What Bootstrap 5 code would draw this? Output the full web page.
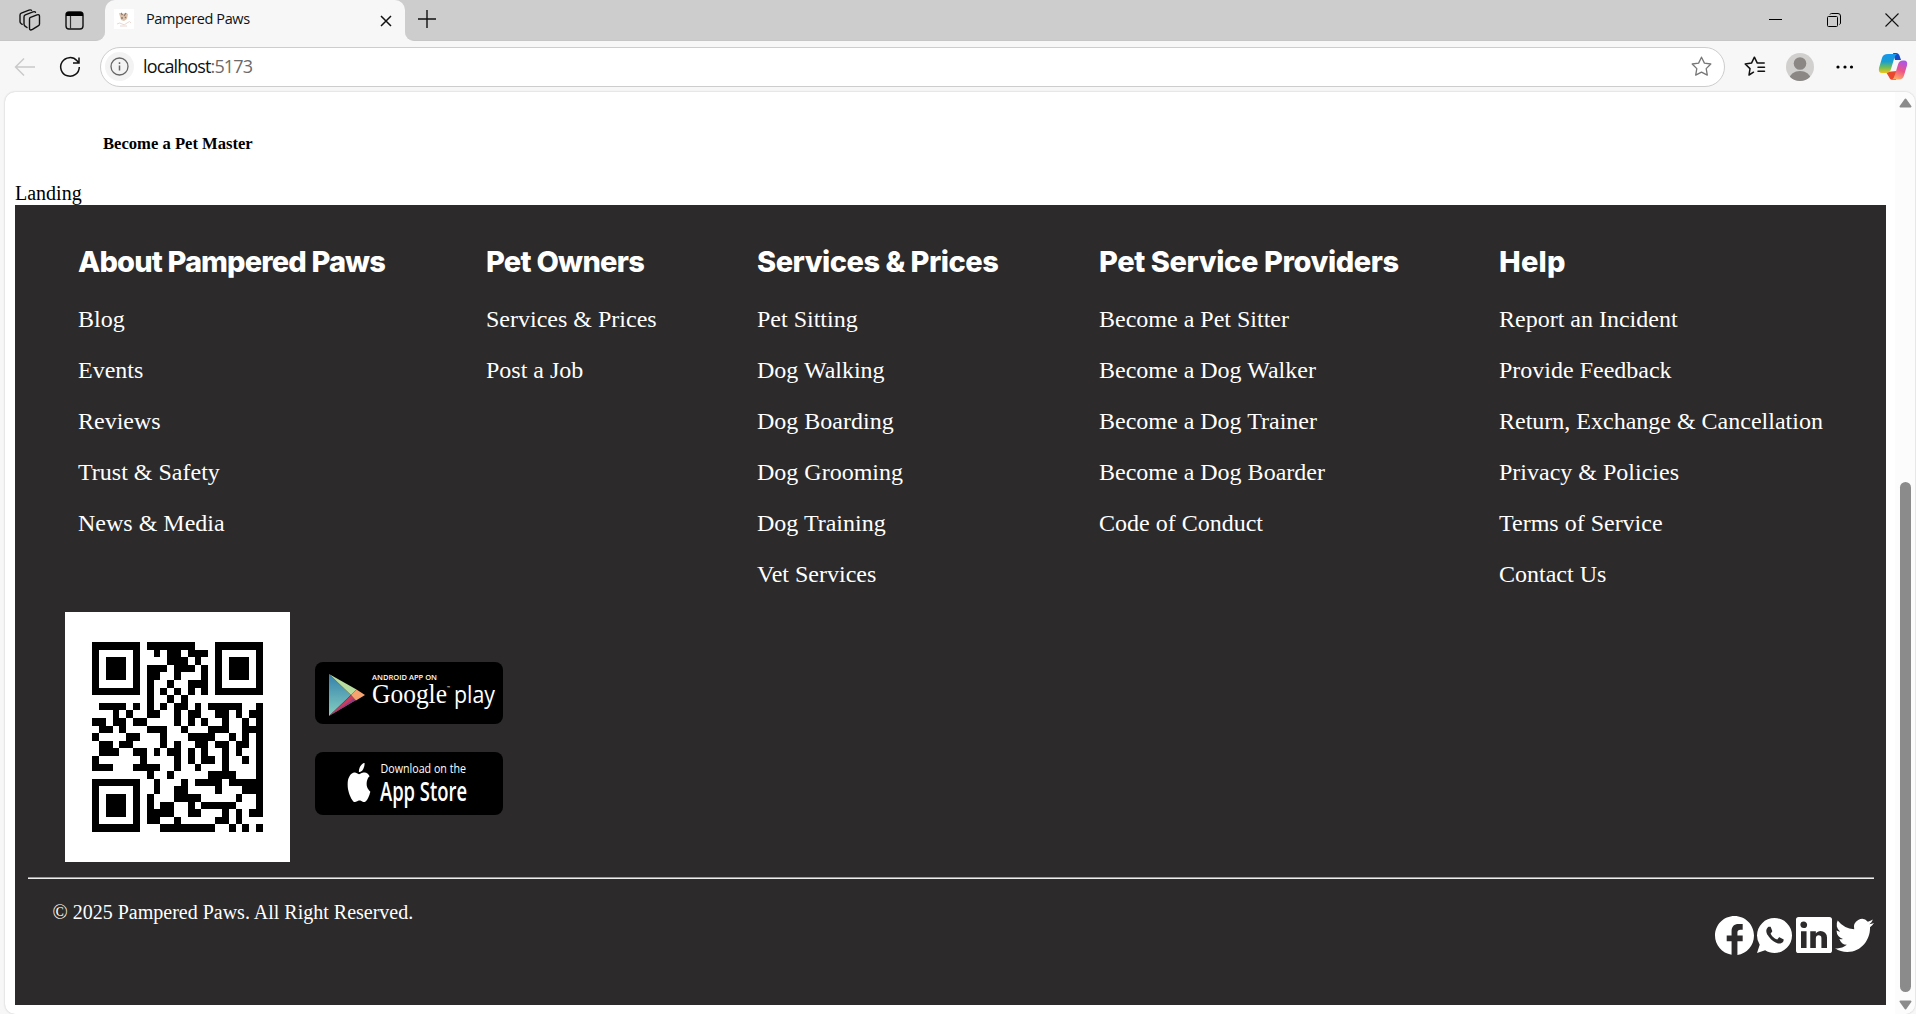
<!DOCTYPE html>
<html lang="en">
<head>
<meta charset="utf-8">
<title>Pampered Paws</title>
<link href="https://cdn.jsdelivr.net/npm/bootstrap@5.3.0/dist/css/bootstrap.min.css" rel="stylesheet">
<style>
html,body{height:100%;overflow:hidden}
body{background:#f7f7f7;font-family:"Liberation Serif",serif;color:#000}
svg{display:block;flex:none;overflow:visible}
.tabstrip{height:41px;background:#f7f7f7}
.strip-left{width:105px;background:#cdcdcd;border-bottom-right-radius:9px;padding:0 21px 0 19px;border-bottom:1px solid #c6c6c6}
.active-tab{width:300px;background:#f7f7f7;border-radius:10px 10px 0 0;padding:0 13px 3px 9px;font:14.5px "Open Sans",sans-serif;color:#111}
.strip-mid{background:#cdcdcd}
.strip-right{background:#cdcdcd;border-bottom-left-radius:9px;padding:0 17.500px 0 12px;border-bottom:1px solid #c6c6c6}
.title-text{letter-spacing:-.4px;margin-left:12px;line-height:20px}
.toolbar-row{height:51px;padding:0 8px 0 14px}
.url-box{width:1625px;height:40px;margin-left:19px;border:1px solid #cdcdcd;border-radius:20px;padding:0 12px 0 4px;font:18px "Open Sans",sans-serif}
.info-dot{width:29px;height:29px;background:#f3f3f3}
.url-text{margin-left:9px;letter-spacing:-.87px;color:#111;line-height:24px;margin-bottom:1px}
.url-text span{color:#6b6b6b}
.viewport-card{height:922px;margin-left:5px;background:#fff;border-radius:10px;box-shadow:0 0 2px #bbb;padding-left:10px;width:1910px}
.page-col{width:1871px}
.master-line{font-size:16.6px;font-weight:700;line-height:20px;padding:42px 0 0 88px}
.landing-line{font-size:20px;line-height:23px;margin-top:28px}
.site-footer{height:800px;background:#2c2a2b;color:#fff;padding:40px 12px 0 13px}
.foot-cols{height:367px;padding-left:50px}
.foot-cols h3{font:800 29px/34px Inter,sans-serif;margin:0 0 15px;white-space:nowrap}
.foot-cols a{display:block;font-size:24px;line-height:27px;padding:12px 0;color:#fff;text-decoration:none;white-space:nowrap}
.w1{width:408px}.w2{width:271px}.w3{width:342px}.w4{width:400px}.w5{width:324px}
.w1 h3{letter-spacing:-.87px}.w2 h3{letter-spacing:-.75px}.w3 h3{letter-spacing:-.5px}.w4 h3{letter-spacing:-.4px}.w5 h3{letter-spacing:.2px}
.apps{margin-left:37px;gap:25px}
.badges-col{gap:28px;padding-top:2px}
.qr-box{width:225px;height:250px;background:#fff;padding:30px 27px}
.rule{height:2px;margin-top:15px;background:linear-gradient(#9a9a9a 50%,#eee 50%)}
.copyright{font-size:20px;line-height:23px;margin:22px 0 0 24.500px}
.socials{margin-top:36px;height:40px}
.sbar{width:20px;margin-left:9px;background:#fcfcfc;border-radius:0 10px 10px 0;padding:6px 0 4px}
.sthumb{width:11px;height:510px;border-radius:6px;background:#8b8b8b;margin-top:auto;margin-bottom:8px}
</style>
<script src="https://cdn.jsdelivr.net/npm/bootstrap@5.3.0/dist/js/bootstrap.bundle.min.js"></script>
</head>
<body>
<header>
 <div class="tabstrip d-flex">
  <div class="bg-transparent"><div class="strip-left d-flex align-items-center justify-content-between h-100">
   <svg width="23" height="22" viewBox="0 0 23 22" fill="none" stroke="#111" stroke-width="1.4" stroke-linejoin="round" stroke-linecap="round"><path d="M10.500 10q0-1.200 1-1.600l6.500-2.600q2.500-.8 2.500 1.500v7.600q0 1.400-1.300 2l-5.700 3.500q-3 1.500-3-1.200z"/><path d="M8 18.500l-2-1.400q-1-.7-1-2V8q0-1.500 1.300-2.100l7.700-3q1.800-.6 2.500.3"/><path d="M3.200 15.300l-1.200-.8q-1-.7-1-2V6.200q0-1.500 1.300-2.100l7.700-3q1.500-.6 2.500.2"/></svg>
   <svg width="19" height="19" viewBox="0 0 19 19"><rect x="1" y="1" width="17" height="17" rx="3" fill="none" stroke="#111" stroke-width="1.400"/><path d="M1 5V3.500Q1 1 3.500 1h12Q18 1 18 3.500V5z"/><path d="M5.500 5v13" stroke="#333" stroke-width="1.200"/></svg>
  </div></div>
  <div class="strip-mid"><div class="active-tab d-flex align-items-center h-100">
   <svg width="20" height="20" viewBox="0 0 20 20"><path fill="#fff" d="M0 0h20v20H0z"/><path d="M5 4l3 1 4-1 2 1-1 5-3 2-3-1z" fill="#dcc3ae"/><path d="M7 4l1.500 2M12 4l-2 3M7 9h2M11 8l1 1" stroke="#92796c" stroke-width="1.300"/><path d="M3 15q3-2 5 0t5-1 4 0M6 17h7" stroke="#ead7d2" fill="none"/></svg>
   <span class="title-text">Pampered Paws</span>
   <svg class="ms-auto mt-1" width="12" height="12" viewBox="0 0 12 12" stroke="#111" stroke-width="1.500"><path d="M1 1l10 10M11 1L1 11"/></svg>
  </div></div>
  <div class="strip-right d-flex flex-grow-1 align-items-center">
   <svg width="20" height="20" viewBox="0 0 20 20" stroke="#111" stroke-width="1.400"><path d="M1 9h18M10 0v18"/></svg>
   <svg class="ms-auto" width="13" height="13" viewBox="0 0 13 13" stroke="#000" stroke-width="1"><path d="M0 5.500h13"/></svg>
   <svg style="margin-left:45px" width="14" height="14" viewBox="0 0 14 14" fill="none" stroke="#000"><rect x=".5" y="3.500" width="10" height="10" rx="1"/><path d="M3 1.500q.3-1 1.500-1H11q2.500 0 2.500 2.500v7q0 1-1 1.500"/></svg>
   <svg style="margin-left:44px" width="14" height="14" viewBox="0 0 14 14" stroke="#111" stroke-width="1.100"><path d="M.5.500l13 13M13.500.500l-13 13"/></svg>
  </div>
 </div>
 <div class="toolbar-row d-flex align-items-center">
  <svg width="22" height="20" viewBox="0 0 22 20" fill="none" stroke="#c9c9c9" stroke-width="1.400"><path d="M21 10H2M10 1.500L1.500 10l8.500 8.500"/></svg>
  <svg style="margin-left:23px" width="22" height="22" viewBox="0 0 22 22" fill="none" stroke="#111" stroke-width="1.500"><path d="M20.300 11A9.300 9.300 0 1 1 18 4.800L19.500 6.500M20 1.500v5.500h-6"/></svg>
  <div class="url-box bg-white d-flex align-items-center">
   <div class="info-dot rounded-circle d-flex align-items-center justify-content-center"><svg width="19" height="19" viewBox="0 0 19 19" fill="none" stroke="#666" stroke-width="1.300"><circle cx="9.500" cy="9.500" r="8.500"/><path d="M9.500 8.500v5M9.500 5.300v1.600" stroke-width="1.500"/></svg></div>
   <div class="url-text">localhost<span>:5173</span></div>
   <svg class="ms-auto" width="21" height="21" viewBox="0 0 21 21" fill="none" stroke="#777" stroke-width="1.300" stroke-linejoin="round"><path d="M10.500 1.200l2.900 5.900 6.400.9-4.600 4.600 1.100 6.500-5.800-3-5.800 3 1.100-6.500L1.200 8l6.400-.9z"/></svg>
  </div>
  <svg style="margin-left:19px" width="22" height="21" viewBox="0 0 22 21" fill="none" stroke="#111" stroke-width="1.500" stroke-linejoin="round" stroke-linecap="round"><path d="M9.500 16.200L5 19l1-6.400L1.200 8l6.300-.9 2.900-5.900 2.900 5.900h6.900M14 11.200h6.500M14 15.200h6.500"/></svg>
  <svg style="margin-left:20px" width="28" height="28" viewBox="0 0 28 28"><defs><clipPath id="av"><circle cx="14" cy="14" r="14"/></clipPath></defs><g clip-path="url(#av)"><path fill="#d2d0ce" d="M0 0h28v28H0z"/><circle cx="14" cy="10.500" r="6.300" fill="#8a8785"/><ellipse cx="14" cy="26" rx="10.500" ry="8" fill="#8a8785"/></g></svg>
  <svg style="margin-left:22px" width="18" height="4" viewBox="0 0 18 4"><circle cx="2" cy="2" r="1.600"/><circle cx="9" cy="2" r="1.600"/><circle cx="15.500" cy="2" r="1.600"/></svg>
  <svg class="ms-auto" width="29" height="27" viewBox="0 0 29 27"><defs><linearGradient id="ca" x2="0" y2="1"><stop stop-color="#1695ee"/><stop offset=".4" stop-color="#199ed0"/><stop offset=".7" stop-color="#6fbd58"/><stop offset="1" stop-color="#f2c51b"/></linearGradient><linearGradient id="cb" x1=".6" x2=".3" y2="1"><stop stop-color="#ac55e8"/><stop offset=".5" stop-color="#ed5488"/><stop offset="1" stop-color="#ffae62"/></linearGradient></defs><path d="M14 0h3q3 0 4 4l1 3h-6z" fill="#1748c5"/><path d="M7 19l3 5q1 3 4 3h3l1-9z" fill="#e9472e"/><path d="M9 1h9q-2 1-3 5l-3 10q-1 4-5 4H3q-4 0-3-5l3-10q1-4 6-4z" fill="url(#ca)"/><path d="M20 26.500h-7q2-1 3-5l3-10q1-4 5-4h1q4 0 3 5l-3 10q-1 4-5 4z" fill="url(#cb)"/></svg>
 </div>
</header>
<div class="viewport-card d-flex">
 <main class="page-col">
  <div class="master-line">Become a Pet Master</div>
  <div class="landing-line">Landing</div>
  <footer class="site-footer">
   <div class="foot-cols d-flex">
    <div class="w1"><h3>About Pampered Paws</h3><a>Blog</a><a>Events</a><a>Reviews</a><a>Trust &amp; Safety</a><a>News &amp; Media</a></div>
    <div class="w2"><h3>Pet Owners</h3><a>Services &amp; Prices</a><a>Post a Job</a></div>
    <div class="w3"><h3>Services &amp; Prices</h3><a>Pet Sitting</a><a>Dog Walking</a><a>Dog Boarding</a><a>Dog Grooming</a><a>Dog Training</a><a>Vet Services</a></div>
    <div class="w4"><h3>Pet Service Providers</h3><a>Become a Pet Sitter</a><a>Become a Dog Walker</a><a>Become a Dog Trainer</a><a>Become a Dog Boarder</a><a>Code of Conduct</a></div>
    <div class="w5"><h3>Help</h3><a>Report an Incident</a><a>Provide Feedback</a><a>Return, Exchange &amp; Cancellation</a><a>Privacy &amp; Policies</a><a>Terms of Service</a><a>Contact Us</a></div>
   </div>
   <div class="apps d-flex align-items-center">
    <div class="qr-box"><svg width="171" height="190" viewBox="0 0 25 25" preserveAspectRatio="none" shape-rendering="crispEdges"><path id="qr"/></svg></div>
    <div class="badges-col d-flex flex-column">
     <svg width="188" height="62" viewBox="0 0 188 62"><rect width="188" height="62" rx="8"/><defs><linearGradient id="gp" x2="0" y2="1"><stop stop-color="#347fac"/><stop offset="1" stop-color="#85d0bf"/></linearGradient></defs><path d="M14 12v42l22-21z" fill="url(#gp)"/><path d="M14 12l27.500 15.500L36 33z" fill="#b9dca0"/><path d="M14 54l27-16-5-5z" fill="#c63d60"/><path d="M14 54l27-16-2-1.500z" fill="#8f3e83"/><path d="M41.500 27.500L50 33l-9 5.500-5-5.500z" fill="#f7a36f"/>
      <g fill="#fff"><text x="57" y="17.700" font-family="Open Sans,sans-serif" font-weight="600" font-size="7.500" textLength="65" lengthAdjust="spacingAndGlyphs">ANDROID APP ON</text><text x="57" y="41" font-family="Liberation Serif,serif" font-size="27" textLength="75" lengthAdjust="spacingAndGlyphs">Google</text><text x="132" y="27" font-size="4" font-family="Open Sans,sans-serif">™</text><text x="139" y="41" font-family="Open Sans,sans-serif" font-size="24" textLength="41" lengthAdjust="spacingAndGlyphs">play</text></g></svg>
     <svg width="188" height="63" viewBox="0 0 188 63"><rect width="188" height="63" rx="8"/><svg x="32.500" y="11" width="23" height="39" viewBox="1.400 0 13.200 16" preserveAspectRatio="none"><path fill="#fff" d="M11.182.008C11.148-.03 9.923.023 8.857 1.180c-1.066 1.156-.902 2.482-.878 2.516.024.034 1.520.087 2.475-1.258.955-1.345.762-2.391.728-2.430zm3.314 11.733c-.048-.096-2.325-1.234-2.113-3.422.212-2.189 1.675-2.789 1.698-2.854.023-.065-.597-.79-1.254-1.157a3.692 3.692 0 0 0-1.563-.434c-.108-.003-.483-.095-1.254.116-.508.139-1.653.589-1.968.607-.316.018-1.256-.522-2.267-.665-.647-.125-1.333.131-1.824.328-.49.196-1.422.754-2.074 2.237-.652 1.482-.311 3.830-.067 4.560.244.729.625 1.924 1.273 2.796.576.984 1.340 1.667 1.659 1.899.319.232 1.219.386 1.843.067.502-.308 1.408-.485 1.766-.472.357.013 1.061.154 1.782.539.571.197 1.111.115 1.652-.105.541-.221 1.324-1.059 2.238-2.758.347-.79.505-1.217.473-1.282z"/></svg>
      <g fill="#fff" font-family="Open Sans,sans-serif"><text x="65.500" y="21" font-size="13" textLength="85.500" lengthAdjust="spacingAndGlyphs">Download on the</text><text x="65" y="48.500" font-size="26.500" font-weight="600" textLength="87" lengthAdjust="spacingAndGlyphs">App Store</text></g></svg>
    </div>
   </div>
   <div class="rule"></div>
   <div class="d-flex justify-content-between">
    <div class="copyright">© 2025 Pampered Paws. All Right Reserved.</div>
    <div class="socials d-flex align-items-center">
     <svg width="39" height="39" viewBox="2 2 20 20" fill="#fff"><path d="M22 12c0-5.520-4.480-10-10-10S2 6.480 2 12c0 4.900 3.500 9 8.500 9.900V15H8v-3h2.500V9.800c0-2.400 1.300-3.700 3.600-3.700h2.100V9H15c-1 0-1.500.4-1.500 1.400V12h2.700v3h-2.700v6.950c4.800-.6 8.500-4.760 8.500-9.950z"/></svg>
     <svg style="margin-left:3px" width="35" height="35" viewBox="2 2 20 20" fill="#fff" fill-rule="evenodd"><path d="M16.750 13.960c.25.13.41.2.46.3.06.11.04.61-.21 1.180-.2.56-1.240 1.100-1.700 1.120-.46.02-.47.36-2.960-.73-2.490-1.090-3.990-3.750-4.110-3.920-.12-.17-.96-1.380-.92-2.610.05-1.220.69-1.800.95-2.040.24-.26.51-.29.68-.26h.47c.15 0 .36-.06.55.45l.69 1.870c.06.13.1.28.01.44l-.27.41-.39.42c-.12.12-.26.25-.12.5.12.26.62 1.090 1.320 1.780.91.88 1.710 1.170 1.950 1.300.24.14.39.12.54-.04l.81-.94c.19-.25.35-.19.58-.11l1.670.88zM12 2a10 10 0 0 1 10 10 10 10 0 0 1-10 10c-1.970 0-3.800-.57-5.350-1.550L2 22l1.550-4.650A9.969 9.969 0 0 1 2 12 10 10 0 0 1 12 2z"/></svg>
     <svg style="margin-left:4px" width="36" height="36" viewBox="3 3 18 18" fill="#fff" fill-rule="evenodd"><path d="M19.700 3a1.300 1.300 0 0 1 1.300 1.300v15.400a1.300 1.300 0 0 1-1.300 1.300H4.300a1.300 1.300 0 0 1-1.300-1.300V4.300A1.300 1.300 0 0 1 4.300 3zM18.500 18.500v-5.300a3.260 3.260 0 0 0-3.260-3.260c-.85 0-1.840.52-2.320 1.300v-1.110h-2.790v8.370h2.790v-4.930c0-.77.62-1.400 1.390-1.400a1.400 1.400 0 0 1 1.400 1.400v4.930zM6.880 8.560a1.680 1.680 0 0 0 1.680-1.680c0-.93-.75-1.690-1.680-1.690a1.690 1.690 0 0 0-1.690 1.690c0 .93.76 1.680 1.690 1.680m1.390 9.940v-8.370H5.500v8.370z"/></svg>
     <svg style="margin-left:3px" width="39" height="33" viewBox="0 2 16 13" preserveAspectRatio="none" fill="#fff"><path d="M5.026 15c6.038 0 9.341-5.003 9.341-9.334 0-.14 0-.282-.006-.422A6.685 6.685 0 0 0 16 3.542a6.658 6.658 0 0 1-1.889.518 3.301 3.301 0 0 0 1.447-1.817 6.533 6.533 0 0 1-2.087.793A3.286 3.286 0 0 0 7.875 6.030a9.325 9.325 0 0 1-6.767-3.429 3.289 3.289 0 0 0 1.018 4.382A3.323 3.323 0 0 1 .64 6.575v.045a3.288 3.288 0 0 0 2.632 3.218 3.203 3.203 0 0 1-.865.115 3.230 3.230 0 0 1-.614-.057 3.283 3.283 0 0 0 3.067 2.277A6.588 6.588 0 0 1 .78 13.580a6.320 6.320 0 0 1-.78-.045A9.344 9.344 0 0 0 5.026 15z"/></svg>
    </div>
   </div>
  </footer>
 </main>
 <div class="sbar d-flex flex-column align-items-center">
  <svg width="13" height="10" viewBox="0 0 13 10"><path d="M6.500 1.500L11.500 8.500H1.500z" fill="#8b8b8b" stroke="#8b8b8b" stroke-width="2" stroke-linejoin="round"/></svg>
  <div class="sthumb"></div>
  <svg width="13" height="10" viewBox="0 0 13 10"><path d="M6.500 8.500L11.500 1.500H1.500z" fill="#8b8b8b" stroke="#8b8b8b" stroke-width="2" stroke-linejoin="round"/></svg>
 </div>
</div>
<script>
// Dark modules of each QR row as column numbers or first-last runs; the three finder squares are added below.
const rows=["8-14","9 11-12 14-16","11-13 15","8-10 12-14 16","8-9 12 16","8 11 14-16","8 10 12 14 16","8 11 13","1-4 6 8 10 12-13 15 17-21 24","3 5 8-9 12 14-15 18-19 21 23-24","0-1 3-4 6-7 12 14 16 19 22 24","1-2 4 8-10 13 17-19 22-24","0 5-6 10 14-17 20 22 24","1-2 4-5 10 12 15-16 18-19 21-22 24","1-3 6-7 9 11-12 14 16 19 21 24","0 7 12 14 16-17 19 22 24","0-2 6-9 12 15 19 24","8 11 17-20 24","9 13 15-18 20-24","9 12-13 18 22-24","8 12-15 21 24","8 10-11 14 16-20 24","8-11 14-15 19 21 23-24","8-9 12 18-19 21","10-17 20 22 24"];
let d="";
rows.forEach((r,y)=>r.split(" ").forEach(s=>{const [a,b=a]=s.split("-").map(Number);d+=`M${a} ${y}h${b-a+1}v1h-${b-a+1}z`}));
[[0,0],[18,0],[0,18]].forEach(([x,y])=>d+=`M${x} ${y}h7v7h-7zM${x+1} ${y+1}v5h5v-5zM${x+2} ${y+2}h3v3h-3z`);
document.getElementById("qr").setAttribute("d",d);
</script>
</body>
</html>
